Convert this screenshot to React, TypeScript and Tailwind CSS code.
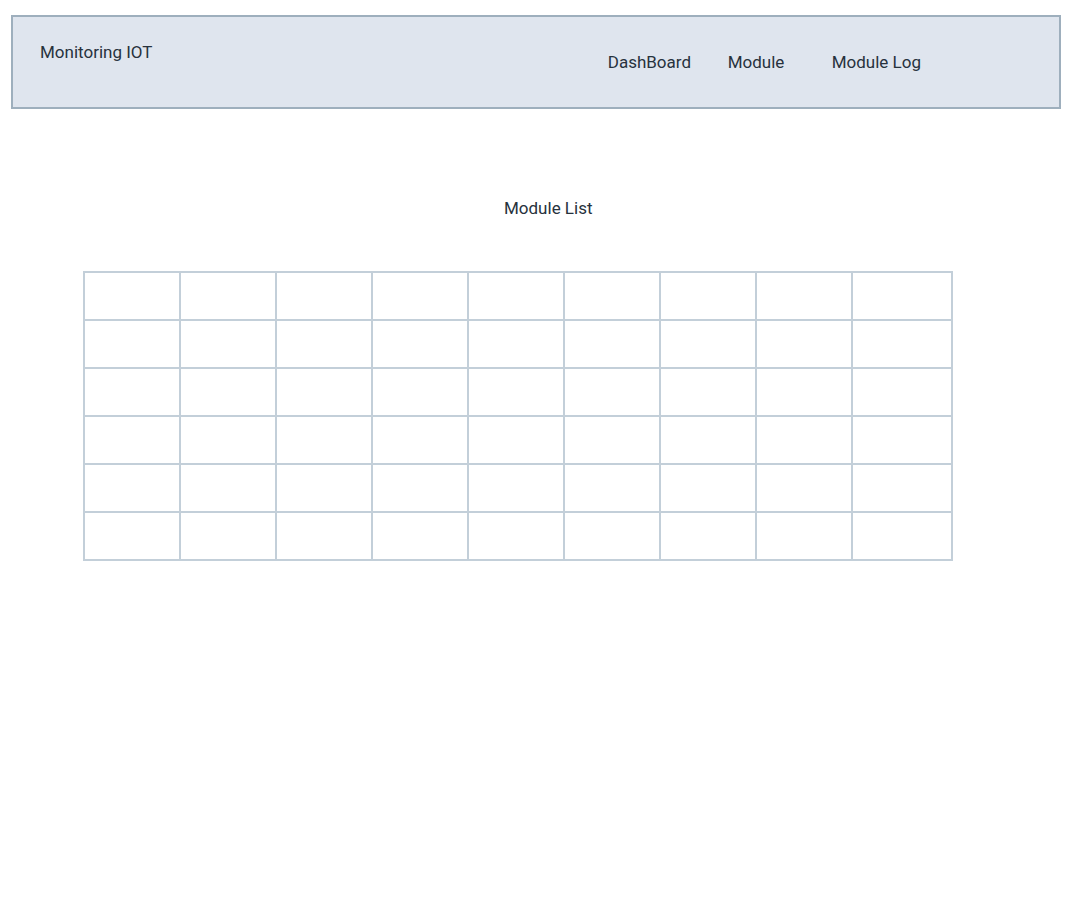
import React from "react";

const COLS = 9;
const ROWS = 6;

export default function App() {
  return (
    <div className="min-h-[924px] bg-white text-[#27323d] font-['Roboto',sans-serif]">
      {/* Top bar */}
      <header className="ml-[11px] mt-[15px] w-[1050px] h-[94px] border-2 border-[#9eafbd] bg-[#dfe5ee] flex items-start">
        <div className="ml-[27px] mt-[25px] text-[17px] leading-5">Monitoring IOT</div>
        <nav className="ml-auto mr-[138px] mt-[35px] flex text-[17px] leading-5">
          <a className="w-[120px]">DashBoard</a>
          <a className="w-[104px]">Module</a>
          <a>Module Log</a>
        </nav>
      </header>

      {/* Module list */}
      <h2 className="mt-[89px] ml-[504px] text-[17px] leading-5">Module List</h2>

      <div className="mt-[53px] ml-[83px] w-fit border-r-2 border-b-2 border-[#c3cfd9]">
        {Array.from({ length: ROWS }).map((_, r) => (
          <div key={r} className="flex">
            {Array.from({ length: COLS }).map((_, c) => (
              <div
                key={c}
                className={`h-[48px] border-l-2 border-t-2 border-[#c3cfd9] ${
                  c === COLS - 1 ? "w-[100px]" : "w-[96px]"
                }`}
              />
            ))}
          </div>
        ))}
      </div>
    </div>
  );
}
